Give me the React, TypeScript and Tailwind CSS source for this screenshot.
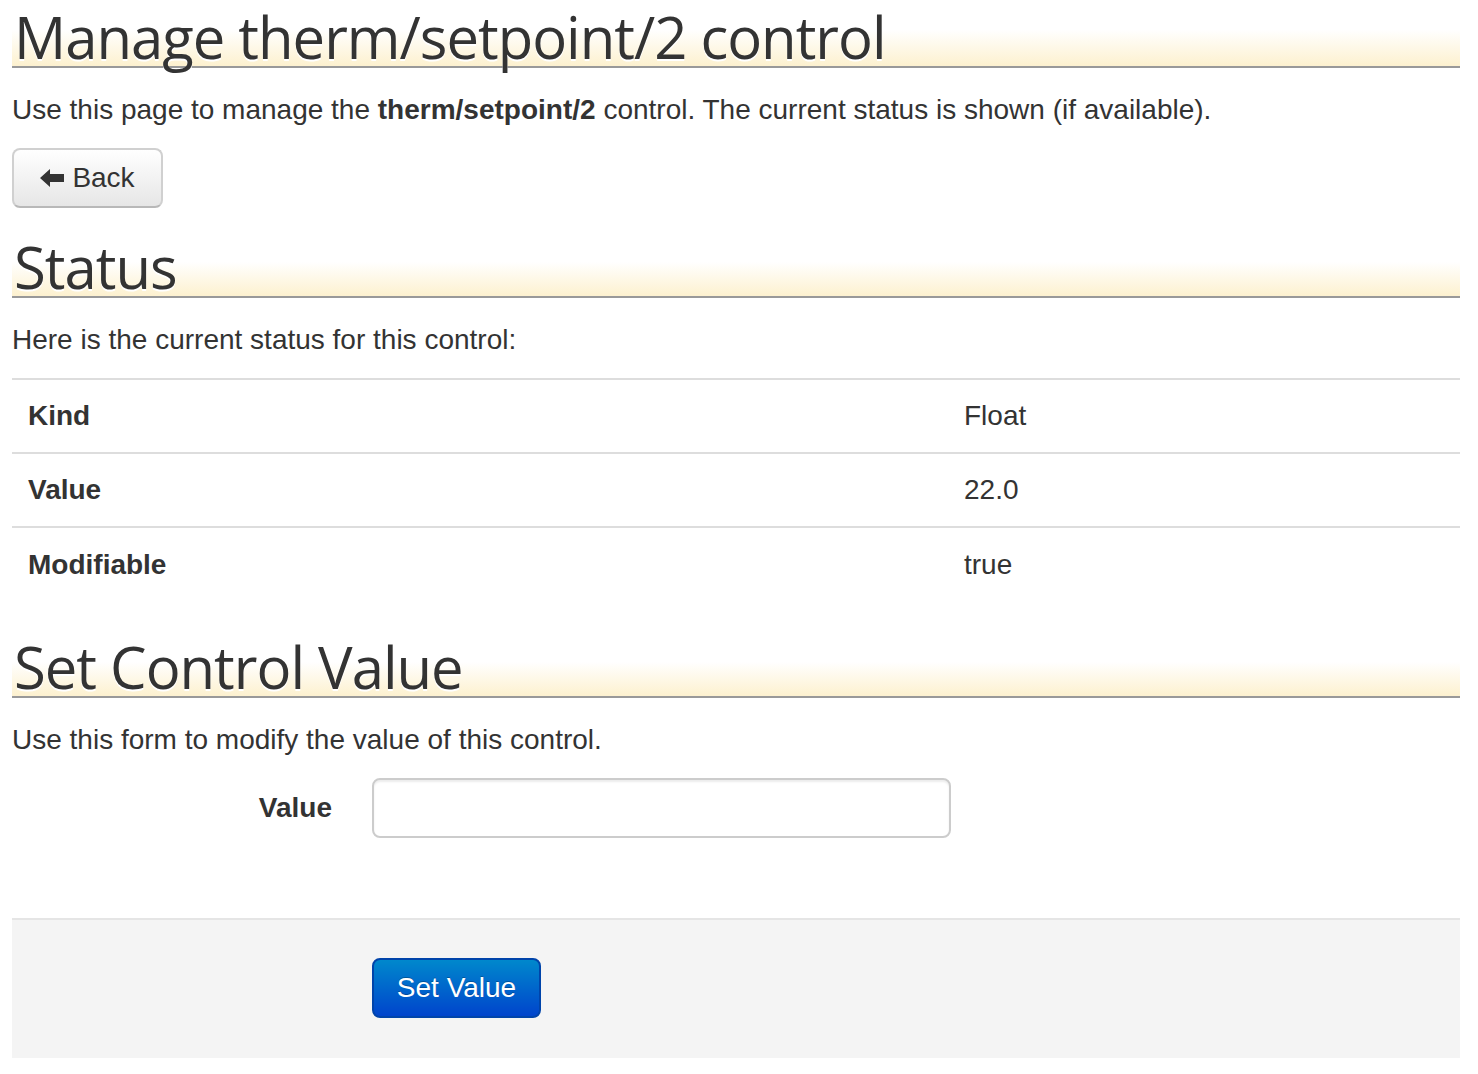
import React from "react";

const headFont = { fontFamily: '"Open Sans", "Noto Sans", sans-serif' };

function Heading({ children, h }: { children: React.ReactNode; h: string }) {
  return (
    <div
      className={`flex items-end border-b-2 border-[#999999] bg-[linear-gradient(to_bottom,#ffffff_45%,#fdf1cf)] text-[#333333] ${h}`}
    >
      <span className="pl-[2px] text-[58px] leading-none tracking-[-1px] [text-shadow:0_2px_0_#fff]" style={headFont}>
        {children}
      </span>
    </div>
  );
}

function ArrowLeft() {
  return (
    <svg width="24" height="20" viewBox="0 0 24 20" className="inline-block">
      <path d="M0 10 L10 1 L10 6 L24 6 L24 14 L10 14 L10 19 Z" fill="#333" />
    </svg>
  );
}

export default function App() {
  return (
    <div className="min-h-screen bg-white">
      <div
        className="ml-[12px] w-[1448px] text-[#333333] text-[28px] leading-[40px]"
        style={{ fontFamily: '"Liberation Sans", Arial, sans-serif' }}
      >
        <Heading h="h-[68px]">Manage therm/setpoint/2 control</Heading>
        <p className="mt-[22px]">
          Use this page to manage the <b>therm/setpoint/2</b> control. The current status is shown (if available).
        </p>
        <button className="mt-[18px] flex h-[60px] w-[151px] items-center justify-center gap-[8px] rounded-[8px] border-2 border-[#d0d0d0] border-b-[#b8b8b8] bg-[linear-gradient(to_bottom,#ffffff,#e6e6e6)] text-[28px] text-[#333333]">
          <ArrowLeft />
          <span>Back</span>
        </button>
        <div className="mt-[26px]">
          <Heading h="h-[64px]">Status</Heading>
        </div>
        <p className="mt-[22px]">Here is the current status for this control:</p>
        <table className="mt-[18px] w-full border-collapse">
          <tbody>
            {[
              ["Kind", "Float"],
              ["Value", "22.0"],
              ["Modifiable", "true"],
            ].map(([k, v]) => (
              <tr key={k} className="h-[74px] border-t-2 border-[#dddddd]">
                <td className="w-[936px] px-[16px] font-bold">{k}</td>
                <td className="px-[16px]">{v}</td>
              </tr>
            ))}
          </tbody>
        </table>
        <div className="mt-[33px]">
          <Heading h="h-[64px]">Set Control Value</Heading>
        </div>
        <p className="mt-[22px]">Use this form to modify the value of this control.</p>
        <div className="mt-[18px] flex items-center">
          <label className="w-[320px] text-right font-bold">Value</label>
          <input
            className="ml-[40px] h-[60px] w-[579px] rounded-[8px] border-2 border-[#cccccc] bg-white px-[12px] shadow-[inset_0_2px_2px_rgba(0,0,0,0.075)] outline-none"
            type="text"
          />
        </div>
        <div className="mt-[80px] h-[140px] border-t-2 border-[#e5e5e5] bg-[#f4f4f4] pl-[360px] pt-[38px]">
          <button className="flex h-[60px] w-[169px] items-center justify-center rounded-[8px] border-2 border-[#0044aa] bg-[linear-gradient(to_bottom,#0088cc,#0044cc)] text-[28px] text-white [text-shadow:0_-1px_0_rgba(0,0,0,0.25)]">
            Set Value
          </button>
        </div>
      </div>
    </div>
  );
}
